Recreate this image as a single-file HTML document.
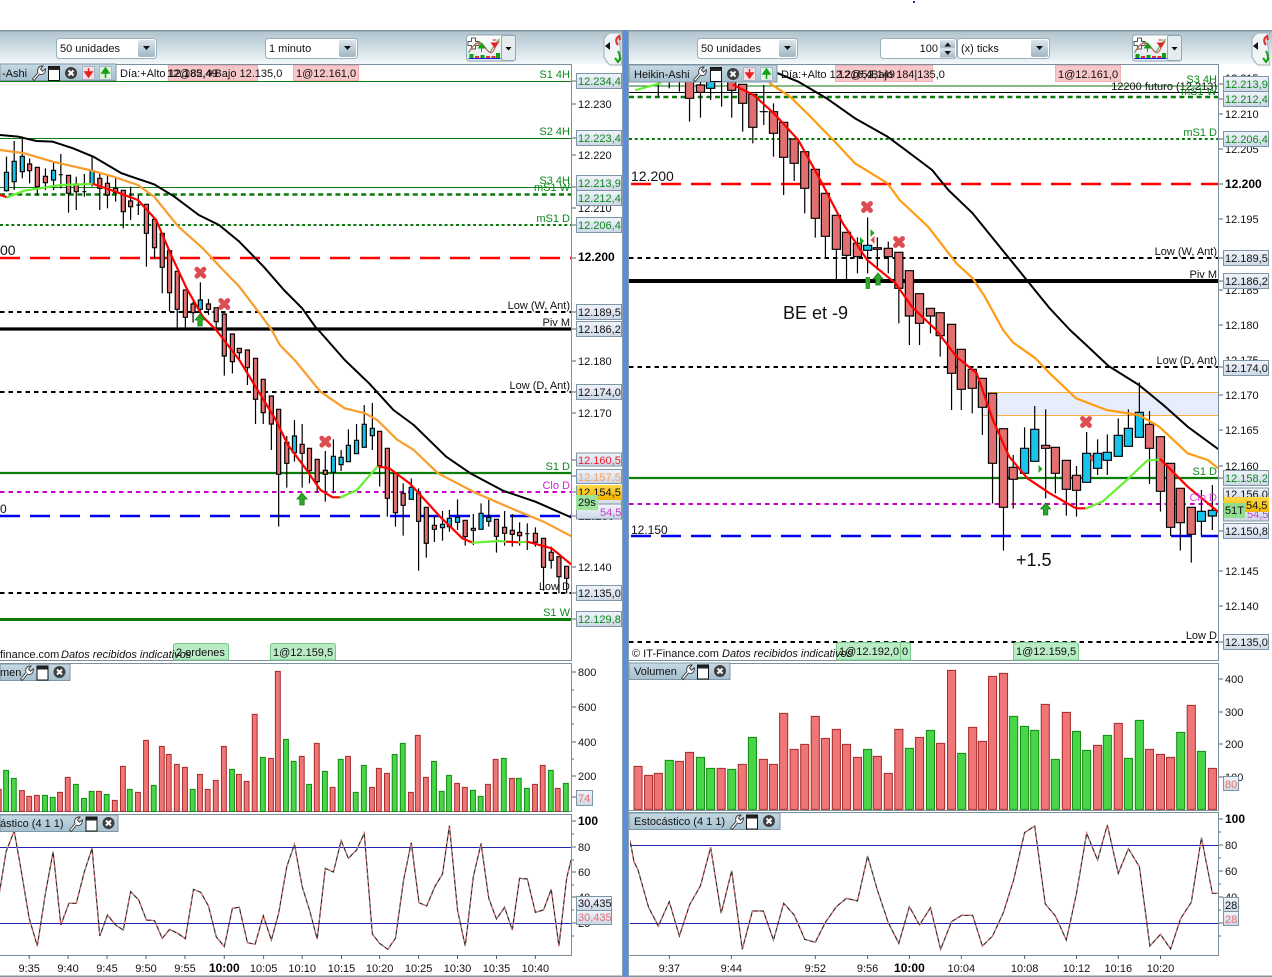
<!DOCTYPE html>
<html><head><meta charset="utf-8"><title>Charts</title>
<style>
html,body{margin:0;padding:0;background:#fff;width:1272px;height:977px;overflow:hidden}
svg{display:block;font-family:"Liberation Sans",Arial,sans-serif;font-size:11px;fill:#111}
path,polyline,line{vector-effect:non-scaling-stroke}
.w{fill:none;stroke:#000;stroke-width:1.2}
.r{fill:#e26f6f;stroke:#000;stroke-width:1.2}
.b{fill:#19c4ec;stroke:#000;stroke-width:1.2}
.vr{fill:#ee7676;stroke:#a82a2a;stroke-width:1}
.vg{fill:#48d648;stroke:#108c10;stroke-width:1}
.ma{fill:none;stroke-linejoin:round;stroke-linecap:round}
.k{stroke:#000;stroke-width:2}
.o{stroke:#f89c2c;stroke-width:2.2}
.o2{stroke:#ff9c14;stroke-width:2.2}
.rd{stroke:#f00;stroke-width:2.2}
.gn{stroke:#66ee33;stroke-width:2.2}
.sk{fill:none;stroke:#2b2b2b;stroke-width:1.2}
.sr{fill:none;stroke:#e07070;stroke-width:1.2;stroke-dasharray:3 4}
.g{fill:#0b8a1a}.e{text-anchor:end}
.box{fill:url(#bx);stroke:#7e95a5;stroke-width:1}
.tab{fill:url(#tb);stroke:#7f97a5;stroke-width:1}
.bt{fill:url(#cb)}
.pk{fill:#f7c6c8;stroke:#f0b0b4;stroke-width:1}
.og{fill:#b9ebc4;stroke:#72cc86;stroke-width:1}
.ax{stroke:#7b909c;stroke-width:1;fill:none}
.big{font-size:12px;font-weight:bold;fill:#000}
</style></head><body>
<svg width="1272" height="977" viewBox="0 0 1272 977" xmlns="http://www.w3.org/2000/svg">
<defs>
<linearGradient id="tbg" x1="0" y1="0" x2="0" y2="1"><stop offset="0" stop-color="#afc3cd"/><stop offset=".5" stop-color="#cfdde4"/><stop offset="1" stop-color="#f4f8fa"/></linearGradient>
<linearGradient id="tb" x1="0" y1="0" x2="0" y2="1"><stop offset="0" stop-color="#c6d9e3"/><stop offset="1" stop-color="#a5c0cf"/></linearGradient>
<linearGradient id="bx" x1="0" y1="0" x2="0" y2="1"><stop offset="0" stop-color="#f1f4fb"/><stop offset="1" stop-color="#cdd7e6"/></linearGradient>
<linearGradient id="cb" x1="0" y1="0" x2="0" y2="1"><stop offset="0" stop-color="#dbe6ec"/><stop offset="1" stop-color="#9fb6c4"/></linearGradient>
<linearGradient id="ib" x1="0" y1="0" x2="0" y2="1"><stop offset="0" stop-color="#fff"/><stop offset="1" stop-color="#dfe8ec"/></linearGradient>
<linearGradient id="yl" x1="0" y1="0" x2="0" y2="1"><stop offset="0" stop-color="#ffd84a"/><stop offset="1" stop-color="#f2b400"/></linearGradient>
<clipPath id="cl"><rect x="0" y="64" width="571" height="596"/></clipPath>
<clipPath id="cr"><rect x="629" y="64" width="589" height="596"/></clipPath>
<clipPath id="cv"><rect x="0" y="660" width="571" height="300"/></clipPath>
<clipPath id="cw"><rect x="630" y="660" width="588" height="300"/></clipPath>
<g id="wr"><path d="M1.500 14L7 7.500C5.800 3.500 8 .8 12 1L9.500 4L11.500 6.200L14.300 3.800C14.600 8 12 10.500 8.500 9L3.200 15.500Z" fill="#fff" stroke="#333" stroke-width=".9"/></g>
<g id="wn"><rect x=".5" y=".5" width="11" height="14" fill="#fff" stroke="#111"/><rect x="1" y="1" width="10" height="3" fill="#222"/></g>
<g id="xx"><circle cx="6" cy="6" r="6" fill="#3f3f3f"/><path d="M3.500 3.500L8.500 8.500M8.500 3.500L3.500 8.500" stroke="#fff" stroke-width="2"/></g>
<g id="dn"><rect x=".5" y=".5" width="12" height="13" fill="#f4dfe2" stroke="#a9b5c9"/><path d="M6.500 2V6M3 6H10L6.500 11Z" fill="#e82020" stroke="#e82020" stroke-width="1.500"/></g>
<g id="up"><rect x=".5" y=".5" width="12" height="13" fill="#e0f2e2" stroke="#a9b5c9"/><path d="M6.500 12V7M3 7H10L6.500 2Z" fill="#10a010" stroke="#10a010" stroke-width="1.500"/></g>
<g id="x"><path d="M-3.500-3.500L3.500 3.500M3.500-3.500L-3.500 3.500" stroke="#dc4c50" stroke-width="4.800" stroke-linecap="round" fill="none"/></g>
<g id="ar"><path d="M-5 0L0-6L5 0H2.200V6H-2.200V0Z" fill="#2ca82c" stroke="#118011" stroke-width=".8"/></g>
<g id="ic"><rect x="0" y="0" width="49" height="26" rx="3" fill="url(#ib)" stroke="#93a8b4"/><rect x="35" y=".5" width="14" height="25" rx="2" fill="#e4ecf0" stroke="#93a8b4"/><path d="M5 3H9V6.500H12.500V10.500H9V14H5V10.500H1.500V6.500H5Z" fill="#fff" stroke="#555"/><path d="M2 18C8 8 12 5 16 9S22 20 25 15S31 6 33 4" fill="none" stroke="#39b54a" stroke-width="1.100"/><path d="M3 16C9 6 13 7 17 11S24 22 28 14S32 8 33 6" fill="none" stroke="#d9534f" stroke-width="1.100"/><path d="M26 5H30M25 8H31L28 12Z" fill="#e02020" stroke="#e02020"/><path d="M15 17V13M12 13H18L15 9Z" fill="#10a010" stroke="#10a010"/><rect x="3" y="19" width="4" height="4" fill="#0fa00f"/><rect x="8.500" y="21" width="4" height="2" fill="#d33"/><rect x="14" y="20" width="4" height="3" fill="#0fa00f"/><rect x="19.500" y="21" width="4" height="2" fill="#d33"/><rect x="25" y="21" width="4" height="2" fill="#d33"/><rect x="29.500" y="18" width="4" height="5" fill="#0fa00f"/><rect x="2" y="23" width="32" height="1" fill="#1a1ae0"/><path d="M39 12H45L42 15.500Z" fill="#000"/></g>
<g id="sd"><path d="M0 0H12C10 3 8 8 10 13C11 20 10 26 12 32H0C-3 30-5 26-6 24V6C-5 4-3 1 0 0Z" fill="#f2f5f7" stroke="#9aafba"/><path d="M-5 13L0 9V17Z" fill="#111"/><path d="M9 3C5 6 6 10 8 12M6 6L9 3L10 7" fill="none" stroke="#e23030" stroke-width="2"/><path d="M8 29C11 26 10 21 8 18M5 25L8 29L11 25" fill="none" stroke="#12a012" stroke-width="2"/></g>
</defs>

<rect width="1272" height="977" fill="#fff"/>
<rect x="913" y="1" width="2" height="2" fill="#2020c0"/>

<!-- toolbars -->
<rect x="0" y="31" width="622" height="33" fill="url(#tbg)"/>
<rect x="629" y="31" width="643" height="33" fill="url(#tbg)"/>
<rect x="0" y="30" width="622" height="1.500" fill="#7e96a4"/>
<rect x="629" y="30" width="643" height="1.500" fill="#7e96a4"/>

<!-- left combos -->
<rect x="56.500" y="38.500" width="100" height="20" rx="3" fill="#fff" stroke="#9cb0bc"/><rect x="138" y="40" width="17" height="17" rx="2" class="bt"/><path d="M143 46H150L146.500 50Z" fill="#111"/>
<text x="60" y="52">50 unidades</text>
<rect x="265.500" y="38.500" width="92" height="20" rx="3" fill="#fff" stroke="#9cb0bc"/><rect x="339" y="40" width="17" height="17" rx="2" class="bt"/><path d="M344 46H351L347.500 50Z" fill="#111"/>
<text x="269" y="52">1 minuto</text>
<use href="#ic" x="466.500" y="35"/>
<use href="#sd" x="610" y="33"/>

<!-- right combos -->
<rect x="697.500" y="38.500" width="100" height="20" rx="3" fill="#fff" stroke="#9cb0bc"/><rect x="779" y="40" width="17" height="17" rx="2" class="bt"/><path d="M784 46H791L787.500 50Z" fill="#111"/>
<text x="701" y="52">50 unidades</text>
<rect x="880.500" y="38.500" width="76" height="20" rx="3" fill="#fff" stroke="#9cb0bc"/><rect x="940" y="40" width="15" height="8.500" class="bt"/><rect x="940" y="49" width="15" height="8.500" class="bt"/><path d="M944.500 46.500H951L947.700 42.500ZM944.500 51H951L947.700 55Z" fill="#111"/>
<text x="938" y="52" class="e">100</text>
<rect x="957.500" y="38.500" width="92" height="20" rx="3" fill="#fff" stroke="#9cb0bc"/><rect x="1031" y="40" width="17" height="17" rx="2" class="bt"/><path d="M1036 46H1043L1039.500 50Z" fill="#111"/>
<text x="961" y="52">(x) ticks</text>
<use href="#ic" x="1132.500" y="35"/>
<use href="#sd" x="1258" y="33"/>

<!-- divider -->
<rect x="622" y="30" width="7" height="947" fill="#5b8ed8"/>
<rect x="622" y="30" width="1" height="947" fill="#8a9fb0"/>
<rect x="628" y="30" width="1" height="947" fill="#8a9fb0"/>

<!-- panel frames -->
<path class="ax" d="M0 64.500H571.500V660.500H0M0 663.500H571.500V811.500H0M0 814.500H571.500V955.500H0"/>
<path class="ax" d="M629 64.500H1218.500V660.500H629M629 663.500H1218.500V810.500H629M629 812.500H1218.500V955.500H629"/>
<rect x="0" y="975.500" width="622" height="1.500" fill="#7e96a4"/><rect x="629" y="975.500" width="643" height="1.500" fill="#7e96a4"/>

<!-- LEFT PRICE -->
<g clip-path="url(#cl)">
<path d="M0 81.500H571M0 138.500H571M0 187.500H571" stroke="#0f7a0f" stroke-width="1"/>
<path d="M0 194.500H571" stroke="#0a7a0a" stroke-width="2.600" stroke-dasharray="5 3.600"/>
<path d="M0 225H571" stroke="#0a7a0a" stroke-width="1.900" stroke-dasharray="3 2.700"/>
<path d="M0 258H571" stroke="#f00" stroke-width="2.400" stroke-dasharray="20 10"/>
<path d="M0 312H571M0 392H571M0 593H571" stroke="#000" stroke-width="1.900" stroke-dasharray="4.500 4"/>
<path d="M0 329H571" stroke="#000" stroke-width="3.200"/>
<path d="M0 473H571" stroke="#0a7d0a" stroke-width="2.200"/>
<path d="M0 492H571" stroke="#c800c8" stroke-width="1.900" stroke-dasharray="4.500 4"/>
<path d="M0 516H571" stroke="#0000f0" stroke-width="2.400" stroke-dasharray="20 10"/>
<path d="M0 619.500H571" stroke="#0a7d0a" stroke-width="3"/>

<g transform="scale(.40561 .33333)">
<path class="w" d="M16 470V575M35 423V570M55 409V535M73 475V550M92 502V587M112 505V570M132 485V570M150 462V565M169 526V638M188 530V630M208 522V590M227 470V560M246 520V630M265 525V625M285 535V605M304 571V685M322 560V660M341 585V645M361 613V800M381 658V775M400 700V880M418 752V935M437 814V990M457 870V990M476 905V968M494 847V945M514 897V945M533 923V990M145 524H155M203 575H213M336 615H346"/>
<path class="r" d="M68 492h10v20h-10zM87 502h10v58h-10zM107 529h10v19h-10zM164 526h10v54h-10zM183 552h10v23h-10zM241 535h10v30h-10zM260 550h10v35h-10zM280 565h10v13h-10zM299 571h10v64h-10zM317 603h10v17h-10zM356 613h10v87h-10zM376 658h10v85h-10zM395 700h10v102h-10zM413 752h10v126h-10zM432 814h10v114h-10zM452 870h10v82h-10zM471 912h10v26h-10zM509 912h10v16h-10zM528 923h10v42h-10z"/>
<path class="b" d="M11 517h10v55h-10zM30 484h10v61h-10zM50 469h10v46h-10zM127 511h10v29h-10zM222 512h10v40h-10zM489 900h10v28h-10z"/>
<polyline class="ma k" points="0,405 45,410 90,423 130,425 180,445 230,470 300,520 380,553 430,590 490,645 540,675 590,725 650,800 700,870 745,925 780,985"/>
<polyline class="ma o" points="0,450 60,460 130,485 220,510 280,530 340,555 380,590 440,680 500,745 550,810 590,860 640,940 670,990"/>
<polyline class="ma rd" points="0,585 18,592"/>
<polyline class="ma gn" points="18,592 60,572 150,555 230,552"/>
<polyline class="ma rd" points="230,552 285,575 340,600 385,660 420,760 460,865 500,950 533,990"/>
</g>
<g transform="translate(0 330) scale(.40561 .33333)">
<path class="w" d="M553 -48V137M573 12V130M590 55V90M610 60V165M630 85V282M649 148V282M669 198V360M687 238V590M707 318V473M726 270V395M745 282V473M763 355V460M782 388V487M802 363V515M822 328V490M841 360V423M859 298V395M879 282V371M898 225V352M918 219V360M936 304V470M955 355V560M975 430V590M994 460V617M1014 445V508M1032 475V722M1051 532V683M1071 558V636M1091 543V632M1108 540V605M1128 508V600M1147 571V647M1167 552V645M1186 520V598M1205 510V590M1224 568V668M1244 543V647M1263 552V650M1281 577V647M1300 580V660M1320 592V650M1340 625V782M1359 650V716M1378 680V790M1397 709V790M1295 611H1305"/>
<path class="r" d="M548 -48h10v126h-10zM568 12h10v83h-10zM585 55h10v13h-10zM605 60h10v53h-10zM625 85h10v123h-10zM644 148h10v100h-10zM664 198h10v84h-10zM682 238h10v195h-10zM702 337h10v63h-10zM740 343h10v27h-10zM758 355h10v67h-10zM777 388h10v67h-10zM797 421h10v12h-10zM931 304h10v103h-10zM950 355h10v150h-10zM970 430h10v118h-10zM989 490h10v36h-10zM1027 490h10v84h-10zM1046 532h10v108h-10zM1066 586h10v12h-10zM1142 571h10v49h-10zM1162 595h10v6h-10zM1219 568h10v51h-10zM1239 592h10v18h-10zM1258 601h10v12h-10zM1276 607h10v10h-10zM1315 610h10v27h-10zM1335 625h10v87h-10zM1354 667h10v24h-10zM1373 680h10v60h-10zM1392 709h10v36h-10z"/>
<path class="b" d="M721 318h10v50h-10zM817 379h10v48h-10zM836 382h10v22h-10zM854 346h10v49h-10zM874 331h10v40h-10zM893 283h10v69h-10zM913 295h10v22h-10zM1009 472h10v36h-10zM1086 583h10v10h-10zM1103 565h10v25h-10zM1123 562h10v15h-10zM1181 550h10v48h-10zM1200 562h10v12h-10z"/>
<polyline class="ma k" points="785,0 850,90 910,160 970,240 1020,285 1100,380 1160,430 1240,482 1320,515 1408,562"/>
<polyline class="ma o" points="670,0 690,45 730,95 790,185 850,235 900,250 930,270 980,330 1020,360 1080,430 1170,487 1270,540 1340,575 1408,618"/>
<polyline class="ma rd" points="533,0 590,90 630,170 680,270 710,345 750,410 790,480 820,502 840,502"/>
<polyline class="ma gn" points="840,502 880,480 930,410"/>
<polyline class="ma rd" points="935,410 960,415 1010,460 1040,500 1085,560 1140,625 1165,638"/>
<polyline class="ma gn" points="1165,638 1230,633 1250,635"/>
<polyline class="ma rd" points="1250,635 1280,637"/>
<polyline class="ma gn" points="1280,637 1300,635"/>
<polyline class="ma rd" points="1300,635 1360,655 1408,703"/>
</g>
<use href="#x" x="200.400" y="272.700"/><use href="#x" x="224.300" y="304"/><use href="#x" x="325.300" y="441.700"/>
<use href="#ar" x="200" y="320"/><use href="#ar" x="302" y="499"/>
</g>

<!-- left top info bar -->
<rect x="116" y="65" width="455" height="16" fill="#fff"/>
<rect x="168.500" y="65.500" width="65" height="15" class="pk"/><rect x="233.500" y="65.500" width="24" height="15" class="pk"/><rect x="293.500" y="65.500" width="65" height="15" class="pk"/>
<rect x="0" y="64" width="116" height="16.500" class="tab"/>
<text x="2" y="77">-Ashi</text>
<use href="#wr" x="31" y="65"/><use href="#wn" x="48" y="66"/><use href="#xx" x="65" y="67"/><use href="#dn" x="82" y="66"/><use href="#up" x="99" y="66"/>
<text x="120" y="77">Día:+Alto 12.185,4</text><text x="167" y="77">12@82,49</text><text x="208" y="77">+Bajo 12.135,0</text><text x="296" y="77">1@12.161,0</text>

<!-- left labels -->
<g class="g">
<text x="570" y="78" class="e g">S1 4H</text><text x="570" y="135" class="e g">S2 4H</text><text x="570" y="184" class="e g">S3 4H</text><text x="570" y="191" class="e g">mS1 W</text><text x="570" y="222" class="e g">mS1 D</text><text x="570" y="470" class="e g">S1 D</text><text x="570" y="616" class="e g">S1 W</text>
</g>
<text x="570" y="309" class="e">Low (W, Ant)</text><text x="570" y="326" class="e">Piv M</text><text x="570" y="389" class="e">Low (D, Ant)</text><text x="570" y="489" class="e" style="fill:#d820d8">Clo D</text><text x="570" y="590" class="e">Low D</text>
<text x="0" y="255" style="font-size:14px">00</text><text x="0" y="513" style="font-size:12px">0</text>

<!-- left price axis -->
<path d="M572 81H576M572 104H576M572 138H576M572 155H576M572 187H576M572 208H576M572 225H576M572 258H576M572 312H576M572 329H576M572 361H576M572 392H576M572 413H576M572 460H576M572 476H576M572 492H576M572 516H576M572 567H576M572 593H576M572 619H576" stroke="#54656f" fill="none"/>
<text x="578" y="108">12.230</text><text x="578" y="159">12.220</text><text x="578" y="212">12.210</text><text x="578" y="261" class="big">12.200</text><text x="578" y="365">12.180</text><text x="578" y="417">12.170</text><text x="578" y="520" class="big">12.150</text><text x="578" y="571">12.140</text>
<rect x="576.500" y="73.500" width="45" height="15" class="box"/><text x="578" y="85" class="g">12.234,4</text>
<rect x="576.500" y="130.500" width="45" height="15" class="box"/><text x="578" y="142" class="g">12.223,4</text>
<rect x="576.500" y="175.500" width="45" height="15" class="box"/><text x="578" y="187" class="g">12.213,9</text>
<rect x="576.500" y="190.500" width="45" height="15" class="box"/><text x="578" y="202" class="g">12.212,4</text>
<rect x="576.500" y="217.500" width="45" height="15" class="box"/><text x="578" y="229" class="g">12.206,4</text>
<rect x="576.500" y="304.500" width="45" height="15" class="box"/><text x="578" y="316">12.189,5</text>
<rect x="576.500" y="321.500" width="45" height="15" class="box"/><text x="578" y="333">12.186,2</text>
<rect x="576.500" y="384.500" width="45" height="15" class="box"/><text x="578" y="396">12.174,0</text>
<rect x="576.500" y="453" width="45" height="13" class="box"/><text x="578" y="464" style="fill:#e8202a">12.160,5</text>
<rect x="576.500" y="469.500" width="45" height="14" class="box"/><text x="578" y="481" style="fill:#f4a060">12.157,5</text>
<rect x="576.500" y="486" width="45" height="21" class="box"/>
<rect x="576.500" y="504" width="45" height="15" class="box"/><text x="600" y="516" style="fill:#c040d0">54,5</text>
<rect x="577" y="485" width="45" height="15" fill="url(#yl)"/><text x="578" y="496">12.154,5</text>
<rect x="576" y="495" width="22" height="15" fill="#9ce39c"/><text x="578" y="506">29s</text>
<rect x="576.500" y="585.500" width="45" height="15" class="box"/><text x="578" y="597">12.135,0</text>
<rect x="576.500" y="611.500" width="45" height="15" class="box"/><text x="578" y="623" class="g">12.129,8</text>

<!-- left status -->
<path d="M173.500 660V646Q173.500 643.500 176 643.500H226Q228.500 643.500 228.500 646V660Z" class="og"/><text x="176" y="656">2 ordenes</text>
<path d="M270.500 660V646Q270.500 643.500 273 643.500H333Q335.500 643.500 335.500 646V660Z" class="og"/><text x="273" y="656">1@12.159,5</text>
<text x="0" y="658">finance.com</text><text x="61" y="658" style="font-style:italic">Datos recibidos indicativos</text>

<!-- RIGHT PRICE -->
<g clip-path="url(#cr)">
<rect x="982" y="392.500" width="236" height="23" fill="#e7edfd"/>
<path d="M982 392.500H1218M982 415.500H1218M982 392.500V415.500" stroke="#f7b040" stroke-width="1" fill="none"/>
<path d="M629 86H1218" stroke="#0f7a0f" stroke-width="1"/><path d="M629 92.500H1218" stroke="#000" stroke-width="1"/>
<path d="M629 97H1218" stroke="#0a7a0a" stroke-width="2.600" stroke-dasharray="5 3.600"/>
<path d="M629 139H1218" stroke="#0a7a0a" stroke-width="1.900" stroke-dasharray="3 2.700"/>
<path d="M631 184H1218" stroke="#f00" stroke-width="2.400" stroke-dasharray="20 10"/>
<path d="M629 258H1218M629 367H1218M629 642H1218" stroke="#000" stroke-width="1.900" stroke-dasharray="4.500 4"/>
<path d="M629 281H1218" stroke="#000" stroke-width="4"/>
<path d="M629 478H1218" stroke="#0a7d0a" stroke-width="2.200"/>
<path d="M629 504H1218" stroke="#c800c8" stroke-width="1.900" stroke-dasharray="4.500 4"/>
<path d="M631 536H1218" stroke="#0000f0" stroke-width="2.400" stroke-dasharray="20 10"/>

<g transform="translate(636 0) scale(.40561 .33333)">
<path class="w" d="M55 240V290M82 240V265M107 240V275M132 240V365M159 240V353M184 240V300M211 240V320M236 240V353M263 253V395M288 283V430M315 255V375M339 310V470M364 367V585M390 417V543M416 455V640M442 508V713M467 580V773M494 646V840M519 697V840M546 712V820M571 652V820M595 712V810M622 725V820M648 757V970M674 812V1035M699 881V1035M726 925V1000M305 335H325"/>
<path class="r" d="M122 240h20v55h-20zM149 255h20v22h-20zM226 240h20v31h-20zM253 253h20v57h-20zM278 283h20v99h-20zM329 335h20v65h-20zM354 367h20v105h-20zM380 417h20v73h-20zM406 455h20v110h-20zM432 508h20v147h-20zM457 580h20v129h-20zM484 646h20v102h-20zM509 697h20v69h-20zM536 730h20v40h-20zM585 743h20v5h-20zM612 745h20v25h-20zM638 757h20v108h-20zM664 812h20v136h-20zM689 881h20v89h-20zM716 925h20v23h-20z"/>
<path class="b" d="M174 245h20v20h-20zM561 736h20v15h-20z"/>
<polyline class="ma k" points="350,220 400,245 470,295 540,355 620,410 670,455 730,510 770,570 830,640 900,745 960,835 1020,925 1070,990"/>
<polyline class="ma o2" points="330,250 380,290 430,350 490,425 540,490 620,550 650,600 720,680 790,790 830,835 860,890 905,990"/>
<polyline class="ma gn" points="0,270 60,250"/>
<polyline class="ma rd" points="240,255 290,285 340,340 400,420 450,530 510,670 570,780 640,850 680,920 740,990"/>
</g>
<g transform="translate(636 330) scale(.40561 .33333)">
<path class="w" d="M750 -52V80M778 -17V240M802 58V240M829 118V250M854 145V315M879 190V520M906 296V662M930 375V536M958 292V430M983 228V394M1010 238V505M1034 352V490M1061 391V557M1086 408V560M1111 306V457M1138 328V435M1162 313V435M1189 265V379M1214 238V349M1241 157V322M1266 243V462M1293 320V545M1318 400V618M1342 475V662M1369 532V698M1394 480V618M1421 465V600"/>
<path class="r" d="M740 -52h20v69h-20zM768 -17h20v147h-20zM792 58h20v120h-20zM819 118h20v57h-20zM844 145h20v87h-20zM869 190h20v210h-20zM896 296h20v236h-20zM920 412h20v36h-20zM1000 346h20v9h-20zM1024 352h20v78h-20zM1051 391h20v87h-20zM1076 436h20v45h-20zM1256 283h20v72h-20zM1283 320h20v164h-20zM1308 400h20v192h-20zM1332 475h20v103h-20zM1359 532h20v81h-20z"/>
<path class="b" d="M948 355h20v75h-20zM973 298h20v96h-20zM1101 370h20v87h-20zM1128 370h20v45h-20zM1152 367h20v24h-20zM1179 316h20v63h-20zM1204 295h20v54h-20zM1231 247h20v75h-20zM1384 544h20v30h-20zM1411 541h20v17h-20z"/>
<polyline class="ma k" points="1070,0 1110,45 1165,108 1240,165 1300,225 1360,290 1435,357"/>
<polyline class="ma o2" points="905,0 930,38 985,85 1020,130 1085,205 1160,240 1240,255 1290,290 1360,370 1410,390 1435,415"/>
<polyline class="ma rd" points="740,0 790,80 840,130 880,270 920,380 965,445 1020,490 1085,535 1110,535"/>
<polyline class="ma gn" points="1110,535 1150,515 1210,450 1260,392 1293,388"/>
<polyline class="ma rd" points="1293,388 1360,470 1435,545"/>
</g>
<use href="#x" x="867" y="207"/><use href="#x" x="899" y="242"/><use href="#x" x="1086" y="422"/>
<use href="#ar" x="878" y="279"/><use href="#ar" x="1045.600" y="509"/>
<rect x="865.500" y="277" width="4.500" height="12" fill="#2ca82c"/>
<path d="M860 237L864 241L860 245ZM870.500 229L874.500 233L870.500 237ZM1038.500 465L1042.500 469L1038.500 473Z" fill="#18a818"/>
<path d="M874.500 236L870.500 240L874.500 244ZM1093 454L1089 458L1093 462Z" fill="#e05050"/>
</g>

<!-- right info bar -->
<rect x="835.500" y="65.500" width="65" height="16" class="pk"/><rect x="900.500" y="65.500" width="32" height="16" class="pk"/><rect x="1055.500" y="65.500" width="65" height="16" class="pk"/>
<rect x="629" y="65" width="148" height="17" class="tab"/>
<text x="634" y="78">Heikin-Ashi</text>
<use href="#wr" x="692" y="66"/><use href="#wn" x="710" y="67"/><use href="#xx" x="727" y="68"/><use href="#dn" x="743" y="67"/><use href="#up" x="760" y="67"/>
<text x="781" y="78">Día:+Alto 12.216,4</text><text x="838" y="78">12@52,149</text><text x="871" y="78">Bajo 184|135,0</text><text x="1058" y="78">1@12.161,0</text>

<!-- right labels -->
<text x="1217" y="83" class="e g">S3 4H</text><text x="1217" y="90" class="e">12200 futuro (12.213)</text><text x="1217" y="95" class="e g">mS1 W</text><text x="1217" y="136" class="e g">mS1 D</text><text x="1217" y="475" class="e g">S1 D</text>
<text x="1217" y="255" class="e">Low (W, Ant)</text><text x="1217" y="278" class="e">Piv M</text><text x="1217" y="364" class="e">Low (D, Ant)</text><text x="1217" y="501" class="e" style="fill:#e040e0">Clo D</text><text x="1217" y="639" class="e">Low D</text>
<text x="631" y="181" style="font-size:14px">12.200</text><text x="631" y="534" style="font-size:12px">12.150</text>
<text x="783" y="319" style="font-size:18px">BE et -9</text><text x="1016" y="566" style="font-size:18px">+1.5</text>

<!-- right price axis -->
<path d="M1219 84H1223M1219 99H1223M1219 114H1223M1219 139H1223M1219 149H1223M1219 184H1223M1219 219H1223M1219 258H1223M1219 281H1223M1219 290H1223M1219 325H1223M1219 367H1223M1219 395H1223M1219 430H1223M1219 466H1223M1219 478H1223M1219 531H1223M1219 571H1223M1219 606H1223M1219 642H1223" stroke="#54656f" fill="none"/>
<text x="1225" y="82">12.215</text>
<text x="1225" y="118">12.210</text><text x="1225" y="153">12.205</text><text x="1225" y="188" class="big">12.200</text><text x="1225" y="223">12.195</text><text x="1225" y="294">12.185</text><text x="1225" y="329">12.180</text><text x="1225" y="364">12.175</text><text x="1225" y="399">12.170</text><text x="1225" y="434">12.165</text><text x="1225" y="470">12.160</text><text x="1225" y="575">12.145</text><text x="1225" y="610">12.140</text>
<rect x="1223.500" y="76.500" width="45" height="15" class="box"/><text x="1225" y="88" class="g">12.213,9</text>
<rect x="1223.500" y="91.500" width="45" height="15" class="box"/><text x="1225" y="103" class="g">12.212,4</text>
<rect x="1223.500" y="131.500" width="45" height="15" class="box"/><text x="1225" y="143" class="g">12.206,4</text>
<rect x="1223.500" y="250.500" width="45" height="15" class="box"/><text x="1225" y="262">12.189,5</text>
<rect x="1223.500" y="273.500" width="45" height="15" class="box"/><text x="1225" y="285">12.186,2</text>
<rect x="1223.500" y="360.500" width="45" height="15" class="box"/><text x="1225" y="372">12.174,0</text>
<rect x="1223.500" y="470.500" width="45" height="15" class="box"/><text x="1225" y="482" class="g">12.158,2</text>
<rect x="1223.500" y="488" width="45" height="13" class="box"/><text x="1225" y="498">12.156,0</text>
<rect x="1223.500" y="503" width="45" height="18" class="box"/><text x="1247" y="518" style="fill:#c040d0">54,5</text>
<rect x="1224" y="497" width="45" height="15" fill="url(#yl)"/><text x="1246" y="509">54,5</text>
<rect x="1224" y="503" width="21" height="15" fill="#8fde8f"/><text x="1225" y="514">51T</text>
<rect x="1223.500" y="523.500" width="45" height="15" class="box"/><text x="1225" y="535">12.150,8</text>
<rect x="1223.500" y="634.500" width="45" height="15" class="box"/><text x="1225" y="646">12.135,0</text>

<!-- right status -->
<path d="M836.500 660V646Q836.500 642.500 839 642.500H907Q910.500 642.500 910.500 646V660Z" class="og"/><path d="M900.500 643V660" stroke="#72cc86"/>
<text x="839" y="655">1@12.192,0</text><text x="902" y="655">0</text>
<text x="632" y="657">© IT-Finance.com</text><text x="722" y="657" style="font-style:italic">Datos recibidos indicativos</text>
<path d="M1013.500 660V646Q1013.500 642.500 1016 642.500H1075Q1078.500 642.500 1078.500 646V660Z" class="og"/><text x="1016" y="655">1@12.159,5</text>

<!-- LEFT VOLUME -->
<g clip-path="url(#cv)">
<g transform="translate(0 660) scale(.40561 .33333)">
<path class="vr" d="M-9 388h12V454h-12zM48 392h12V454h-12zM66 409h12V454h-12zM85 406h12V454h-12zM142 397h12V454h-12zM161 352h12V454h-12zM238 394h12V454h-12zM277 421h12V454h-12zM297 319h12V454h-12zM334 397h12V454h-12zM354 241h12V454h-12zM393 259h12V454h-12zM410 283h12V454h-12zM430 313h12V454h-12zM450 322h12V454h-12zM487 343h12V454h-12zM506 388h12V454h-12zM526 361h12V454h-12zM546 259h12V454h-12zM583 343h12V454h-12zM602 364h12V454h-12zM622 163h12V454h-12zM662 295h12V454h-12zM679 34h12V454h-12zM738 289h12V454h-12zM775 250h12V454h-12zM814 382h12V454h-12zM852 289h12V454h-12zM911 382h12V454h-12zM928 325h12V454h-12zM948 340h12V454h-12zM1007 397h12V454h-12zM1024 226h12V454h-12zM1044 352h12V454h-12zM1121 370h12V454h-12zM1140 382h12V454h-12zM1197 373h12V454h-12zM1216 298h12V454h-12zM1256 355h12V454h-12zM1313 373h12V454h-12zM1332 316h12V454h-12zM1369 385h12V454h-12z"/>
<path class="vg" d="M9 331h12V454h-12zM28 355h12V454h-12zM105 406h12V454h-12zM124 412h12V454h-12zM181 373h12V454h-12zM201 415h12V454h-12zM220 394h12V454h-12zM257 403h12V454h-12zM314 388h12V454h-12zM373 376h12V454h-12zM469 388h12V454h-12zM566 328h12V454h-12zM642 292h12V454h-12zM699 238h12V454h-12zM718 304h12V454h-12zM756 373h12V454h-12zM795 334h12V454h-12zM834 298h12V454h-12zM871 397h12V454h-12zM891 316h12V454h-12zM967 283h12V454h-12zM987 250h12V454h-12zM1064 304h12V454h-12zM1083 394h12V454h-12zM1101 346h12V454h-12zM1160 391h12V454h-12zM1179 409h12V454h-12zM1236 295h12V454h-12zM1273 355h12V454h-12zM1293 385h12V454h-12zM1352 331h12V454h-12zM1389 370h12V454h-12z"/>
</g>
<!-- LEFT STOCH -->
<path d="M0 847.500H571M0 923.500H571" stroke="#2222b0" stroke-width="1"/>
<g transform="translate(0 660) scale(.40561 .33333)">
<polyline class="sk" points="-3,710 15,575 35,513 52,630 72,775 92,858 112,700 131,575 150,795 170,730 188,730 208,635 227,565 246,828 265,765 285,795 304,810 322,695 342,720 361,780 381,782 400,835 418,808 438,820 457,836 477,688 495,697 514,738 533,830 553,860 573,745 590,742 610,848 629,853 649,767 669,840 687,760 707,620 726,553 745,680 763,750 782,837 802,625 822,636 841,542 859,595 879,570 898,520 918,822 936,850 956,868 975,835 995,660 1014,548 1033,728 1052,738 1072,680 1091,642 1108,497 1128,750 1147,858 1167,650 1186,550 1205,715 1224,777 1244,742 1263,810 1281,655 1300,657 1320,757 1340,750 1359,688 1378,858 1397,655 1408,600"/>
<polyline class="sr" points="-3,710 15,575 35,513 52,630 72,775 92,858 112,700 131,575 150,795 170,730 188,730 208,635 227,565 246,828 265,765 285,795 304,810 322,695 342,720 361,780 381,782 400,835 418,808 438,820 457,836 477,688 495,697 514,738 533,830 553,860 573,745 590,742 610,848 629,853 649,767 669,840 687,760 707,620 726,553 745,680 763,750 782,837 802,625 822,636 841,542 859,595 879,570 898,520 918,822 936,850 956,868 975,835 995,660 1014,548 1033,728 1052,738 1072,680 1091,642 1108,497 1128,750 1147,858 1167,650 1186,550 1205,715 1224,777 1244,742 1263,810 1281,655 1300,657 1320,757 1340,750 1359,688 1378,858 1397,655 1408,600"/>
</g>
</g>
<rect x="0" y="664" width="70" height="16.500" class="tab"/><text x="0" y="676">men</text>
<use href="#wr" x="19" y="665"/><use href="#wn" x="36.500" y="665.500"/><use href="#xx" x="53.500" y="666"/>
<rect x="0" y="815" width="118" height="16.500" class="tab"/><text x="0" y="827">ástico (4 1 1)</text>
<use href="#wr" x="68" y="816"/><use href="#wn" x="85.500" y="816.500"/><use href="#xx" x="102.500" y="817"/>
<path d="M572 672H576M572 690H574M572 707H576M572 724H574M572 742H576M572 759H574M572 776H576M572 797H576M572 821H576M572 834H574M572 847H576M572 860H574M572 872H576M572 885H574M572 897H576M572 910H574M572 923H576M572 936H574" stroke="#54656f" fill="none"/>
<text x="578" y="676">800</text><text x="578" y="711">600</text><text x="578" y="746">400</text><text x="578" y="780">200</text>
<rect x="576.500" y="790.500" width="16" height="15" class="box"/><text x="578" y="802" style="fill:#e87070">74</text>
<text x="578" y="825" class="big">100</text><text x="578" y="851">80</text><text x="578" y="876">60</text><text x="578" y="901">40</text><text x="578" y="927">20</text>
<rect x="576.500" y="896.500" width="35" height="14" class="box"/><text x="578" y="907">30,435</text>
<rect x="576.500" y="910.500" width="35" height="14" class="box"/><text x="578" y="921" style="fill:#e87070">30,435</text>
<!-- left time axis -->
<path d="M29.200 955V959M68.100 955V959M107 955V959M146 955V959M185 955V959M224.300 955V959M263.600 955V959M302.200 955V959M341.500 955V959M379.600 955V959M418.600 955V959M457.500 955V959M496.500 955V959M535.400 955V959" stroke="#54656f" fill="none"/>
<g text-anchor="middle">
<text x="29.200" y="972">9:35</text><text x="68.100" y="972">9:40</text><text x="107" y="972">9:45</text><text x="146" y="972">9:50</text><text x="185" y="972">9:55</text><text x="224.300" y="972" class="big">10:00</text><text x="263.600" y="972">10:05</text><text x="302.200" y="972">10:10</text><text x="341.500" y="972">10:15</text><text x="379.600" y="972">10:20</text><text x="418.600" y="972">10:25</text><text x="457.500" y="972">10:30</text><text x="496.500" y="972">10:35</text><text x="535.400" y="972">10:40</text>
</g>

<!-- RIGHT VOLUME -->
<g clip-path="url(#cw)">
<g transform="translate(636 660) scale(.40561 .33333)">
<path class="vr" d="M-5 319h20V448h-20zM21 346h20V448h-20zM45 340h20V448h-20zM97 304h20V448h-20zM122 277h20V448h-20zM200 325h20V448h-20zM252 313h20V448h-20zM304 298h20V448h-20zM329 313h20V448h-20zM354 160h20V448h-20zM380 268h20V448h-20zM406 253h20V448h-20zM432 169h20V448h-20zM457 235h20V448h-20zM484 208h20V448h-20zM509 253h20V448h-20zM536 292h20V448h-20zM585 289h20V448h-20zM612 340h20V448h-20zM638 208h20V448h-20zM689 232h20V448h-20zM741 250h20V448h-20zM768 31h20V448h-20zM820 202h20V448h-20zM844 244h20V448h-20zM869 49h20V448h-20zM896 40h20V448h-20zM999 133h20V448h-20zM1051 157h20V448h-20zM1128 256h20V448h-20zM1179 190h20V448h-20zM1256 268h20V448h-20zM1283 283h20V448h-20zM1308 292h20V448h-20zM1359 136h20V448h-20zM1411 325h20V448h-20z"/>
<path class="vg" d="M72 301h20V448h-20zM149 292h20V448h-20zM174 325h20V448h-20zM226 328h20V448h-20zM277 232h20V448h-20zM561 268h20V448h-20zM664 265h20V448h-20zM716 211h20V448h-20zM793 280h20V448h-20zM921 169h20V448h-20zM948 199h20V448h-20zM973 211h20V448h-20zM1024 298h20V448h-20zM1076 214h20V448h-20zM1101 271h20V448h-20zM1152 226h20V448h-20zM1204 295h20V448h-20zM1231 181h20V448h-20zM1333 217h20V448h-20zM1384 274h20V448h-20z"/>
</g>
<path d="M630 845.500H1218M630 923.500H1218" stroke="#2222b0" stroke-width="1"/>
<g transform="translate(636 660) scale(.40561 .33333)">
<polyline class="sk" points="-15,540 -5,605 5,630 31,742 55,798 82,725 107,828 132,735 159,677 184,562 210,760 236,632 262,868 287,753 314,753 339,840 364,730 390,765 416,838 442,847 467,787 494,740 519,715 546,723 571,588 595,690 622,788 648,850 674,740 699,795 726,743 751,868 778,785 803,766 830,766 854,858 879,828 906,757 931,660 958,518 983,498 1009,732 1034,768 1061,840 1086,700 1111,520 1138,600 1162,495 1189,640 1214,566 1241,620 1267,858 1293,823 1318,867 1343,775 1369,727 1394,533 1421,700 1435,700"/>
<polyline class="sr" points="-15,540 -5,605 5,630 31,742 55,798 82,725 107,828 132,735 159,677 184,562 210,760 236,632 262,868 287,753 314,753 339,840 364,730 390,765 416,838 442,847 467,787 494,740 519,715 546,723 571,588 595,690 622,788 648,850 674,740 699,795 726,743 751,868 778,785 803,766 830,766 854,858 879,828 906,757 931,660 958,518 983,498 1009,732 1034,768 1061,840 1086,700 1111,520 1138,600 1162,495 1189,640 1214,566 1241,620 1267,858 1293,823 1318,867 1343,775 1369,727 1394,533 1421,700 1435,700"/>
</g>
</g>
<rect x="629" y="663" width="101" height="16.500" class="tab"/><text x="634" y="675">Volumen</text>
<use href="#wr" x="680" y="664"/><use href="#wn" x="697" y="664.500"/><use href="#xx" x="714" y="665"/>
<rect x="629" y="813" width="151" height="16.500" class="tab"/><text x="634" y="825">Estocástico (4 1 1)</text>
<use href="#wr" x="729" y="814"/><use href="#wn" x="746" y="814.500"/><use href="#xx" x="763" y="815"/>
<path d="M1219 679H1223M1219 712H1223M1219 744H1223M1219 777H1223M1219 819H1223M1219 832H1221M1219 845H1223M1219 858H1221M1219 871H1223M1219 884H1221M1219 897H1223M1219 910H1221M1219 923H1223M1219 936H1221" stroke="#54656f" fill="none"/>
<text x="1225" y="683">400</text><text x="1225" y="716">300</text><text x="1225" y="748">200</text><text x="1225" y="781">100</text>
<rect x="1223.500" y="776.500" width="15" height="14" class="box"/><text x="1225" y="788" style="fill:#e87070">80</text>
<text x="1225" y="823" class="big">100</text><text x="1225" y="849">80</text><text x="1225" y="875">60</text><text x="1225" y="901">40</text>
<rect x="1223.500" y="897.500" width="15" height="14" class="box"/><text x="1225" y="909">28</text>
<rect x="1223.500" y="911.500" width="15" height="14" class="box"/><text x="1225" y="923" style="fill:#e87070">28</text>
<path d="M669.300 955V959M731.300 955V959M815.300 955V959M867.600 955V959M909.400 955V959M961.300 955V959M1024.600 955V959M1076.500 955V959M1118.300 955V959M1160.500 955V959" stroke="#54656f" fill="none"/>
<g text-anchor="middle">
<text x="669.300" y="972">9:37</text><text x="731.300" y="972">9:44</text><text x="815.300" y="972">9:52</text><text x="867.600" y="972">9:56</text><text x="909.400" y="972" class="big">10:00</text><text x="961.300" y="972">10:04</text><text x="1024.600" y="972">10:08</text><text x="1076.500" y="972">10:12</text><text x="1118.300" y="972">10:16</text><text x="1160.500" y="972">10:20</text>
</g>
</svg>
</body></html>
